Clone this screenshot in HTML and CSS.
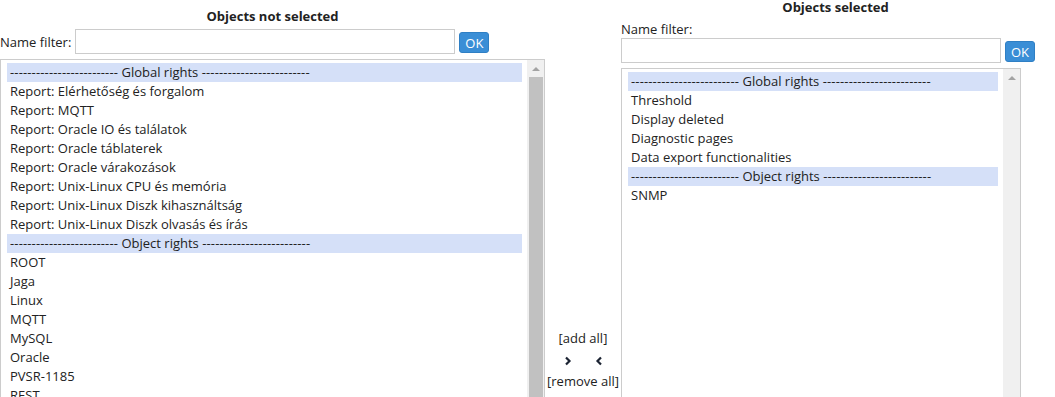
FILE: index.html
```html
<!DOCTYPE html>
<html lang="en">
<head>
    <meta charset="UTF-8">
    <meta name="viewport" content="width=device-width, initial-scale=1.0">
    <title>Object rights</title>
    <link rel="stylesheet" href="styles.css">
</head>
<body>
    <div class="picker">
        <!-- Not selected -->
        <div class="panel panel-left">
            <div class="panel-title">Objects not selected</div>
            <div class="filter-row">
                <label for="filter-left">Name filter:</label>
                <input type="text" id="filter-left" class="filter-input">
                <button class="ok-btn">OK</button>
            </div>
            <div class="list list-left">
                <div class="list-items">
                    <div class="opt group"><span class="dash">-------------------------</span> Global rights <span class="dash">-------------------------</span></div>
                    <div class="opt">Report: Elérhetőség és forgalom</div>
                    <div class="opt">Report: MQTT</div>
                    <div class="opt">Report: Oracle IO és találatok</div>
                    <div class="opt">Report: Oracle táblaterek</div>
                    <div class="opt">Report: Oracle várakozások</div>
                    <div class="opt">Report: Unix-Linux CPU és memória</div>
                    <div class="opt">Report: Unix-Linux Diszk kihasználtság</div>
                    <div class="opt">Report: Unix-Linux Diszk olvasás és írás</div>
                    <div class="opt group"><span class="dash">-------------------------</span> Object rights <span class="dash">-------------------------</span></div>
                    <div class="opt">ROOT</div>
                    <div class="opt">Jaga</div>
                    <div class="opt">Linux</div>
                    <div class="opt">MQTT</div>
                    <div class="opt">MySQL</div>
                    <div class="opt">Oracle</div>
                    <div class="opt">PVSR-1185</div>
                    <div class="opt">REST</div>
                </div>
                <div class="scrollbar">
                    <div class="scroll-up"><span class="arrow"></span></div>
                    <div class="scroll-thumb"></div>
                </div>
            </div>
        </div>

        <!-- Move buttons -->
        <div class="panel-middle">
            <a href="#" class="move-link">[add all]</a>
            <div class="arrows">
                <a href="#" class="arrow-btn">
                    <svg width="8" height="10" viewBox="0 0 8 10"><polyline points="2,1.5 5.5,5 2,8.5" fill="none" stroke="#1c2433" stroke-width="2.2"/></svg>
                </a>
                <a href="#" class="arrow-btn">
                    <svg width="8" height="10" viewBox="0 0 8 10"><polyline points="6,1.5 2.5,5 6,8.5" fill="none" stroke="#1c2433" stroke-width="2.2"/></svg>
                </a>
            </div>
            <a href="#" class="move-link">[remove all]</a>
        </div>

        <!-- Selected -->
        <div class="panel panel-right">
            <div class="panel-title">Objects selected</div>
            <label for="filter-right" class="filter-label">Name filter:</label>
            <div class="filter-row">
                <input type="text" id="filter-right" class="filter-input">
                <button class="ok-btn">OK</button>
            </div>
            <div class="list list-right">
                <div class="list-items">
                    <div class="opt group"><span class="dash">-------------------------</span> Global rights <span class="dash">-------------------------</span></div>
                    <div class="opt">Threshold</div>
                    <div class="opt">Display deleted</div>
                    <div class="opt">Diagnostic pages</div>
                    <div class="opt">Data export functionalities</div>
                    <div class="opt group"><span class="dash">-------------------------</span> Object rights <span class="dash">-------------------------</span></div>
                    <div class="opt">SNMP</div>
                </div>
                <div class="scrollbar">
                    <div class="scroll-up"><span class="arrow"></span></div>
                </div>
            </div>
        </div>
    </div>
</body>
</html>
```

FILE: styles.css
```css
* {
    margin: 0;
    padding: 0;
    box-sizing: border-box;
}

html, body {
    height: 100%;
    overflow: hidden;
}

body {
    font-family: 'Open Sans', 'DejaVu Sans', sans-serif;
    font-size: 13px;
    color: #222;
    background: #fff;
}

.picker {
    display: flex;
    align-items: flex-start;
}

.panel-left {
    width: 545px;
    padding-top: 9px;
}

.panel-right {
    width: 429px;
}

.panel-title {
    font-size: 13px;
    font-weight: bold;
    line-height: 14px;
    text-align: center;
    margin-bottom: 6px;
}

.filter-label {
    display: block;
    line-height: 18px;
}

.filter-row {
    display: flex;
    align-items: center;
    height: 25px;
}

.filter-row label {
    margin-right: 4px;
}

.filter-input {
    width: 380px;
    height: 25px;
    border: 1px solid #ccc;
    background: #fff;
    font-family: inherit;
    font-size: 13px;
    padding: 0 4px;
}

.ok-btn {
    width: 30px;
    height: 21px;
    margin-left: 4px;
    margin-top: 2px;
    background: #3a8ed6;
    color: #fff;
    border: 1px solid #2f7fc4;
    border-radius: 3px;
    font-family: inherit;
    font-size: 13px;
    cursor: pointer;
}

.list {
    display: flex;
    margin-top: 5px;
    height: 660px;
    border: 1px solid #ccc;
    background: #fff;
}

.list-left {
    width: 545px;
}

.list-right {
    width: 400px;
}

.list-items {
    flex: 1;
    padding: 3px 5px 0 6px;
}

.opt {
    line-height: 19px;
    height: 19px;
    padding-left: 3px;
    white-space: nowrap;
    cursor: default;
}

.opt.group {
    background: #d5e0f8;
}

.dash {
    letter-spacing: 0.14px;
}

.scrollbar {
    width: 17px;
    background: #f0f0f0;
    display: flex;
    flex-direction: column;
}

.scroll-up {
    height: 17px;
    display: flex;
    justify-content: center;
    padding-top: 7px;
}

.arrow {
    width: 0;
    height: 0;
    border-left: 4px solid transparent;
    border-right: 4px solid transparent;
    border-bottom: 4px solid #a3a3a3;
}

.scroll-thumb {
    flex: 1;
    margin: 0 1px 0 2px;
    background: #c1c1c1;
}

.panel-middle {
    width: 76px;
    padding-top: 328px;
    display: flex;
    flex-direction: column;
    align-items: center;
}

.move-link {
    color: #222;
    text-decoration: none;
    line-height: 20px;
}

.arrows {
    display: flex;
    gap: 23px;
    height: 23px;
    align-items: center;
    padding-top: 2px;
}

.arrow-btn {
    display: flex;
}
```
